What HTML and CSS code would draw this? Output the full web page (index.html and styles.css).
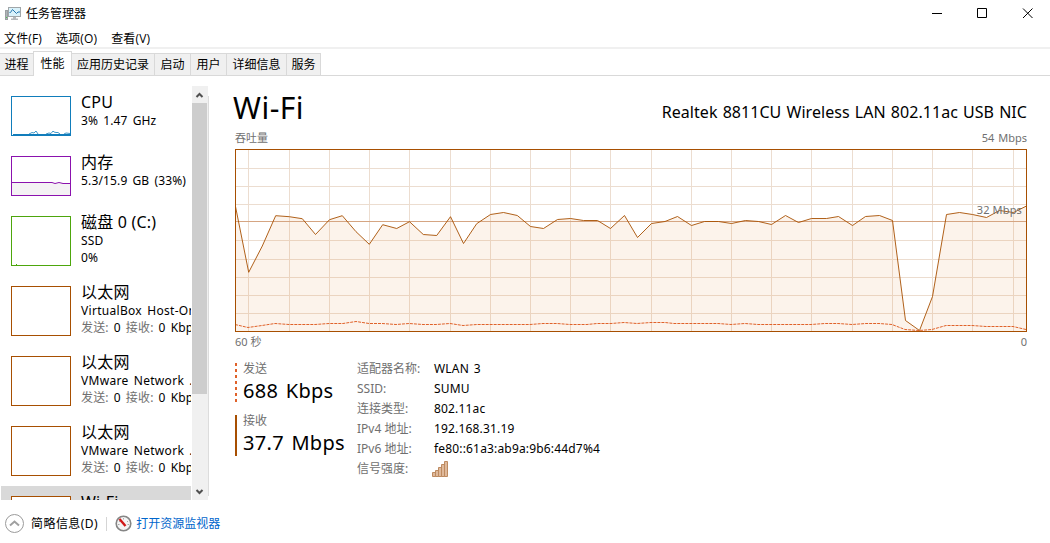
FILE: index.html
```html
<!DOCTYPE html>
<html lang="zh-CN">
<head>
<meta charset="utf-8">
<title>任务管理器</title>
<link rel="stylesheet" href="styles.css">
</head>
<body>
<div class="window">
  <header class="titlebar">
    <svg class="app-icon" width="16" height="16" viewBox="0 0 16 16">
      <rect x="0.5" y="4.5" width="2" height="9" fill="#aeb4b7" stroke="#9a9fa2"/>
      <rect x="1" y="11" width="1" height="1" fill="#4ecb4e"/>
      <rect x="3.5" y="1.500" width="12" height="9" fill="#d9f2fb" stroke="#a0a6a9"/>
      <path d="M4.500 6.500h1l2-3 4 4 1.500-1.500h2" fill="none" stroke="#2878b0"/>
      <path d="M8 11h3v1.500h2V14H6v-1.500h2z" fill="#b4b9bc"/>
    </svg>
    <h1 class="title">任务管理器</h1>
    <svg class="controls" width="104" height="14" viewBox="0 0 104 14" fill="none" stroke="#000">
      <path d="M1 6.500h10M46.500 1.500h9v9h-9zM92 1.500l9.500 9.500M101.500 1.500L92 11"/>
    </svg>
  </header>
  <nav class="menu"><span>文件(F)</span><span>选项(O)</span><span>查看(V)</span></nav>
  <div class="tabs">
    <span class="tab t1">进程</span><span class="tab active">性能</span><span class="tab t3">应用历史记录</span><span class="tab t4">启动</span><span class="tab t4">用户</span><span class="tab t6">详细信息</span><span class="tab t7">服务</span>
  </div>
  <main class="main">
    <aside class="side">
      <div class="list">
        <div class="item short">
          <svg class="thumb" width="60" height="40" fill="none" stroke="#117dbb">
            <rect x="0.5" y="0.5" width="59" height="39"/>
            <path d="M2 38.500h57"/><path stroke-width="0.8" d="M18 38l3-1.500 2 .5 2-2 2 3M35 38l3-1 2 .5 2-2.500 1 1 2 .5 2 0 2 1.500M53 38l2-1 4 .5"/>
          </svg>
          <div class="info"><h2>CPU</h2><p>3% 1.47 GHz</p></div>
        </div>
        <div class="item short">
          <svg class="thumb" width="60" height="40" fill="none" stroke="#8b12ae">
            <path d="M1 26.500h40l3 1 5-1 10 1V39H1z" fill="#f4f2f4" stroke="none"/>
            <path d="M1 26.500h40l3 1 4-1 4 1h8"/>
            <rect x="0.5" y="0.5" width="59" height="39"/>
          </svg>
          <div class="info"><h2>内存</h2><p>5.3/15.9 GB (33%)</p></div>
        </div>
        <div class="item">
          <svg class="thumb" width="60" height="50" fill="none" stroke="#4da60c"><rect x="0.5" y="0.5" width="59" height="49"/><path d="M5 48.500h1"/></svg>
          <div class="info"><h2>磁盘 0 (C:)</h2><p>SSD</p><p class="third">0%</p></div>
        </div>
        <div class="item">
          <svg class="thumb" width="60" height="50" fill="none" stroke="#a74f01"><rect x="0.5" y="0.5" width="59" height="49"/></svg>
          <div class="info"><h2>以太网</h2><p class="wide">VirtualBox Host-On</p><p class="third"><i>发送:</i> 0 <i>接收:</i> 0 Kbps</p></div>
        </div>
        <div class="item">
          <svg class="thumb" width="60" height="50" fill="none" stroke="#a74f01"><rect x="0.5" y="0.5" width="59" height="49"/></svg>
          <div class="info"><h2>以太网</h2><p class="wide">VMware Network .</p><p class="third"><i>发送:</i> 0 <i>接收:</i> 0 Kbps</p></div>
        </div>
        <div class="item">
          <svg class="thumb" width="60" height="50" fill="none" stroke="#a74f01"><rect x="0.5" y="0.5" width="59" height="49"/></svg>
          <div class="info"><h2>以太网</h2><p class="wide">VMware Network .</p><p class="third"><i>发送:</i> 0 <i>接收:</i> 0 Kbps</p></div>
        </div>
        <div class="item selected">
          <svg class="thumb" width="60" height="50" fill="#fff" stroke="#a74f01"><rect x="0.5" y="0.5" width="59" height="49"/></svg>
          <div class="info"><h2>Wi-Fi</h2></div>
        </div>
      </div>
      <div class="scroll">
        <svg width="16" height="17" fill="none" stroke="#505050" stroke-width="2"><path d="M4.500 11l3-3 3 3"/></svg>
        <div class="handle"></div>
        <svg width="16" height="17" fill="none" stroke="#505050" stroke-width="2"><path d="M4.500 7l3 3 3-3"/></svg>
      </div>
      <div class="edge"></div>
    </aside>
    <section class="detail">
      <div class="heading"><h2 class="name">Wi-Fi</h2><span class="adapter">Realtek 8811CU Wireless LAN 802.11ac USB NIC</span></div>
      <div class="caption"><span>吞吐量</span><span class="lat">54 Mbps</span></div>
      <div class="plot">
      <svg class="chart" width="792" height="183" viewBox="235 149 792 183" fill="none">
        <path stroke="#ecddd0" d="M236 168.500H1026M236 186.500H1026M236 204.500H1026M236 240.500H1026M236 259.500H1026M236 277.500H1026M236 295.500H1026M236 313.500H1026M248.500 150V331M289.500 150V331M329.500 150V331M369.500 150V331M409.500 150V331M450.500 150V331M490.500 150V331M530.500 150V331M570.500 150V331M610.500 150V331M651.500 150V331M691.500 150V331M731.500 150V331M771.500 150V331M811.500 150V331M852.500 150V331M892.500 150V331M932.500 150V331M972.500 150V331M1013.500 150V331"/>
        <path id="receive" fill="#e08a3c" fill-opacity="0.1" d="M235.500 206.500L248.700 272.300 262.300 246 275.700 215.700 289.300 216.700 302.300 218.700 315.500 234.500 329.500 219.700 342.300 215.700 356 231.700 369.300 244.300 382.700 224.700 396.700 228.500 409.500 221.700 423.300 234.500 436.700 235.500 450.500 216.700 463.500 243.500 476.700 223.700 490.500 214.500 503.500 212.500 517.300 215.500 530.500 226.500 543.500 228.500 557.500 219.500 570.500 218.500 583.500 220.500 597.500 220.500 610.500 228.500 624.500 215.500 637.500 237.500 651.500 223.500 665 221.500 677.500 216.500 691.500 225.500 704.500 221.500 718.500 221.500 731.500 223.500 745.500 220.500 758.500 221.500 771.500 224.500 785.500 215.500 798.500 222.500 811.500 218.500 826.500 218.500 838.500 216.500 852.500 225.500 865.500 216.500 879.500 215.500 892.500 220.500 905.500 320.500 919.500 330.500 932.500 296.500 946.500 214.500 959.500 212.500 972.500 214.500 986.500 217.500 999.500 210.500 1013.500 212.500 1026.500 206V331H235.500z"/>
        <path stroke="#d5a582" d="M236 221.500H1026"/>
        <path stroke="#a74f01" stroke-width="0.9" d="M235.500 206.500L248.700 272.300 262.300 246 275.700 215.700 289.300 216.700 302.300 218.700 315.500 234.500 329.500 219.700 342.300 215.700 356 231.700 369.300 244.300 382.700 224.700 396.700 228.500 409.500 221.700 423.300 234.500 436.700 235.500 450.500 216.700 463.500 243.500 476.700 223.700 490.500 214.500 503.500 212.500 517.300 215.500 530.500 226.500 543.500 228.500 557.500 219.500 570.500 218.500 583.500 220.500 597.500 220.500 610.500 228.500 624.500 215.500 637.500 237.500 651.500 223.500 665 221.500 677.500 216.500 691.500 225.500 704.500 221.500 718.500 221.500 731.500 223.500 745.500 220.500 758.500 221.500 771.500 224.500 785.500 215.500 798.500 222.500 811.500 218.500 826.500 218.500 838.500 216.500 852.500 225.500 865.500 216.500 879.500 215.500 892.500 220.500 905.500 320.500 919.500 330.500 932.500 296.500 946.500 214.500 959.500 212.500 972.500 214.500 986.500 217.500 999.500 210.500 1013.500 212.500 1026.500 206"/>
        <path stroke="#e0622a" stroke-dasharray="3 1" d="M235 324.500L248 327.500 262 325.500 275 323.500 289 324.500H315L329 323.500H343L356 321.500 369 323.500H382L396 324.500 409 323.500 423 324.500H436L450 323.500 463 325.500 477 324.500H530L543 323.500H557L570 324.500H587L597 323.500H611L624 322.500 637 323.500 651 322.500H665L674 323.500H718L731 324.500 745 323.500 758 324.500H811L825 323.500H838L852 324.500 866 323.500H879L892 324.500 905 329.500 919 330.500 932 329.500 946 325.500H972L986 326.500H1013L1026 329.500"/>
        <rect x="235.500" y="149.500" width="791" height="182" stroke="#a74f01"/>
      </svg>
      <span class="limit">32 Mbps</span>
      </div>
      <div class="axis"><span>60 秒</span><span>0</span></div>
      <div class="stats">
        <div class="rates">
          <div class="rate send"><span>发送</span><strong>688 Kbps</strong></div>
          <div class="rate receive"><span>接收</span><strong>37.7 Mbps</strong></div>
        </div>
        <dl class="props">
          <dt>适配器名称:</dt><dd>WLAN 3</dd>
          <dt>SSID:</dt><dd>SUMU</dd>
          <dt>连接类型:</dt><dd>802.11ac</dd>
          <dt>IPv4 地址:</dt><dd>192.168.31.19</dd>
          <dt>IPv6 地址:</dt><dd>fe80::61a3:ab9a:9b6:44d7%4</dd>
          <dt>信号强度:</dt>
          <dd><svg class="signal" width="16" height="16" fill="#dfb99b" stroke="#bd8a60"><path stroke-linejoin="round" d="M0.500 11.500h3v4h-3zM3.500 9.500h3v6h-3zM6.500 6.500h3v9h-3zM9.500 3.500h3v12h-3zM12.500 0.500h3v15h-3z"/></svg></dd>
        </dl>
      </div>
    </section>
  </main>
  <footer class="footer">
    <svg width="20" height="20" fill="none"><circle cx="9.500" cy="9.500" r="9" stroke="#9b9b9b"/><path d="M5 11.500l4.500-4 4.500 4" stroke="#a0a0a0" stroke-width="2"/></svg>
    <span class="brief">简略信息(D)</span>
    <span class="divider"></span>
    <svg width="17" height="17"><circle cx="8.500" cy="8.500" r="7.300" fill="#f4f4f4" stroke="#858585" stroke-width="1.600"/><path d="M4 6l1 1M8.500 3v1.500M13 6l-1 1M3 9.500h1.500M12.500 9.500H14" stroke="#aaa"/><path d="M4.500 4l6 7" stroke="#d01818" stroke-width="2.400"/></svg>
    <a class="link">打开资源监视器</a>
  </footer>
</div>
</body>
</html>
```
FILE: styles.css
```css
* { box-sizing: border-box; }
body { margin: 0; background: #fff; color: #000; font: 12px/16px "Noto Sans", "Noto Sans CJK SC", sans-serif; overflow: hidden; }
h1, h2, p, dl, dd { margin: 0; font-weight: 400; }
svg { display: block; flex: none; }
span, h1, h2, p, dt, dd, strong, a { white-space: nowrap; }
.window { width: 1050px; height: 543px; display: flex; flex-direction: column; }
.titlebar { height: 28px; display: flex; align-items: center; padding-left: 5px; flex: none; }
.title { font-size: 12px; margin-left: 5px; flex: 1; }
.controls { margin-right: 15px; }
.menu { height: 21px; display: flex; gap: 14px; padding: 3px 4px 0; border-bottom: 2px solid #f0f0f0; flex: none; font-family: "Open Sans", "Noto Sans CJK SC", sans-serif; letter-spacing: .15px; }
.tabs { height: 27px; flex: none; display: flex; align-items: flex-end; border-bottom: 1px solid #d9d9d9; }
.tab { height: 22px; line-height: 21px; background: #f0f0f0; border: 1px solid #d9d9d9; border-width: 1px 1px 0 0; text-align: center; }
.t1 { width: 34px; }
.tab.active { width: 39px; height: 25px; background: #fff; border-left: 1px solid #d9d9d9; margin: 0 0 -1px -1px; line-height: 23px; }
.t3 { width: 83px; } .t4 { width: 36px; } .t6 { width: 60px; } .t7 { width: 34px; }
.main { height: 424px; display: flex; flex: none; }
.side { width: 209px; padding-top: 10px; height: 424px; display: flex; flex: none; }
.list { width: 191px; height: 414px; padding-left: 1px; overflow: hidden; }
.item { height: 70px; display: flex; padding: 10px 0 0 10px; }
.item.short { height: 60px; }
.item.selected { background: #d9d9d9; }
.info { margin-left: 10px; }
.info h2 { font-size: 16px; line-height: 18px; height: 17px; margin-top: -3px; letter-spacing: .2px; }
.info p { line-height: 16px; margin-top: 3px; letter-spacing: .15px; word-spacing: 1.8px; }
.info p.wide { letter-spacing: .3px; }
.info p.third { margin-top: 1px; }
.info i, dt { color: #707070; font-style: normal; }
.scroll { width: 16px; background: #f0f0f0; display: flex; flex-direction: column; margin-left: 1px; }
.handle { background: #cdcdcd; width: 15px; height: 291px; margin-bottom: 89px; }
.edge { border-right: 1px solid #dcdcdc; width: 1px; margin: 10px 0 4px; }
.detail { width: 792px; margin-left: 26px; padding-top: 12px; }
.heading { display: flex; justify-content: space-between; height: 42px; }
.name { font-size: 30px; line-height: 40px; margin-left: -2px; letter-spacing: .5px; }
.adapter { font-size: 16px; line-height: 20px; margin-top: 14px; letter-spacing: .05px; word-spacing: .9px; }
.caption, .axis { display: flex; justify-content: space-between; color: #707070; font-size: 11px; line-height: 16px; }
.caption { height: 19px; }
.plot { position: relative; height: 183px; }
.limit { position: absolute; right: 5px; top: 53px; color: #707070; font-size: 11px; letter-spacing: .15px; }
.lat { word-spacing: 1px; }
.axis { height: 31px; padding-top: 2px; }
.stats { display: flex; }
.rates { width: 122px; }
.rate { height: 41px; padding-left: 6px; border-left: 2px solid #a74f01; margin-bottom: 11px; display: flex; flex-direction: column; color: #707070; }
.send { border: 0; padding-left: 8px; background: repeating-linear-gradient(#e0622a 0 3px, transparent 3px 6px) 0 0 / 2px 39px no-repeat; }
.rate span { line-height: 12px; }
.rate strong { font-weight: 400; color: #000; font-size: 20px; line-height: 32px; letter-spacing: .3px; word-spacing: 2px; }
.props { display: grid; grid-template-columns: 77px 200px; grid-auto-rows: 20px; margin-top: -2px; }
.props dd { letter-spacing: .17px; word-spacing: 1.5px; }
.signal { margin-left: -2px; }
.footer { flex: none; height: 43px; padding: 4px 0 0 5px; display: flex; align-items: center; }
.brief { margin-left: 6px; letter-spacing: .45px; }
.divider { width: 1px; height: 14px; background: #d5d5d5; margin: 0 8px; }
.link { color: #0066cc; margin-left: 4px; }
```
